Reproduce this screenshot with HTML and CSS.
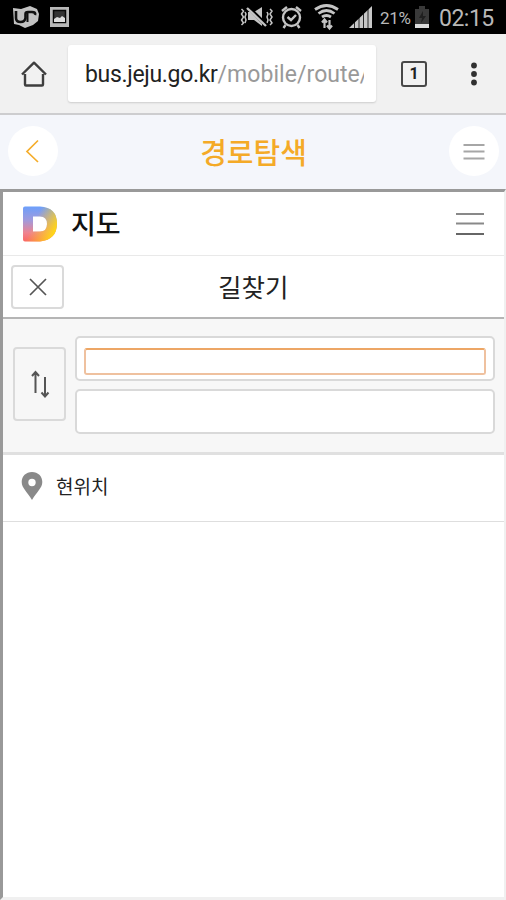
FILE: index.html
```html
<!DOCTYPE html>
<html lang="ko">
<head>
<meta charset="utf-8">
<meta name="viewport" content="width=device-width">
<title>경로탐색</title>
<link rel="stylesheet" href="styles.css">
</head>
<body>
<div class="status">
  <svg class="status-apps" width="60" height="34" viewBox="0 0 60 34">
    <path d="M1 8l8 1 9-3 7 3 2 5-1 7-5 4-8 3-6-3-5-1z" fill="#c2c2c2"/>
    <path d="M4 11v7q0 4 4.500 4t5-4v-4q0-2 2.500-2h4q4 0 3 3" fill="none" stroke="#111" stroke-width="2.600"/>
    <path d="M15.500 13v9" stroke="#111" stroke-width="2"/>
    <path d="M38 7h19v20H38z" fill="#b8b8b8"/>
    <path d="M41.500 10.500h12v12h-12z" fill="#333" stroke="#080808" stroke-width="1.500"/>
    <path d="M42 22v-3l3-2 3 1 2-2 3 2v4z" fill="#ddd"/>
  </svg>
  <svg class="status-signal" width="136" height="34" viewBox="0 0 136 34" fill="none" stroke="#c4c4c4">
    <path d="M1.500 9l2 2-2 3 2 3-2 3 2 3-2 2M5 12l1 2-1 3 1 3-1 3M30 9l2 2-2 3 2 3-2 3 2 3-2 2M27 12l1 2-1 3 1 3-1 3" stroke-width="1.500"/>
    <path d="M8 12h6l8-5v19l-8-6H8z" fill="#c4c4c4" stroke="none"/>
    <path d="M8 7l19 19" stroke="#000" stroke-width="4"/>
    <path d="M7 8l19 18" stroke-width="2.400"/>
    <circle cx="51.500" cy="17.500" r="8.500" stroke-width="2.400"/>
    <path d="M42 11l5-4M61 11l-5-4M45.500 25l-2 3M57.500 25l2 3M47.500 17l3.500 3 5-5" stroke-width="2.400"/>
    <path d="M75 9.500q11.500-8 23 0M78.500 13.500q8-6 16 0M82 17q4.500-3 9 0" stroke-width="2.800"/>
    <path d="M84.500 19.500V28M89.500 20v8.500M82 22.500l2.500-3 2.500 3M87 25.500l2.500 3 2.500-3" stroke-width="2.200"/>
    <path d="M109 28l23-22v22z" fill="#c8c8c8" stroke="none"/>
    <path d="M114.500 20v8M119 16v12M123.500 12v16M128 8v20" stroke="#000" stroke-width=".8"/>
  </svg>
  <span class="percent">21%</span>
  <svg class="battery" width="16" height="34" viewBox="0 0 16 34">
    <path d="M1 9h4V6h6v3h4v19H1z" fill="#393939"/>
    <path d="M9 11l-4 7h3l-1 5 5-7H9z" fill="#1f1f1f"/>
    <path d="M1 24h14v4H1z" fill="#ddd"/>
  </svg>
  <span class="clock">02:15</span>
</div>

<div class="browser">
  <svg class="home" width="28" height="28" viewBox="0 0 28 28" fill="none" stroke="#3e3e3e" stroke-width="2.400" stroke-linejoin="round">
    <path d="M5 14v10.500q0 1 1 1h16q1 0 1-1V14M2 14.500L14 2.700l12 11.800"/>
  </svg>
  <div class="address"><div class="url"><span class="host">bus.jeju.go.kr</span><span class="path">/mobile/route/</span></div></div>
  <div class="tabs">1</div>
  <svg class="more" width="8" height="26" viewBox="0 0 8 26" fill="#303030">
    <circle cx="4" cy="4.500" r="2.900"/><circle cx="4" cy="13" r="2.900"/><circle cx="4" cy="21.500" r="2.900"/>
  </svg>
</div>

<header class="header">
  <div class="round">
    <svg width="50" height="50" viewBox="0 0 50 50" fill="none" stroke="#f5ad2b" stroke-width="1.700"><path d="M30 14.500L19 25.500l11 10.500"/></svg>
  </div>
  <h1>경로탐색</h1>
  <div class="round">
    <svg width="50" height="50" viewBox="0 0 50 50" stroke="#a6a6a6" stroke-width="2"><path d="M14.500 19h21M14.500 25.500h21M14.500 32.500h21"/></svg>
  </div>
</header>

<main class="frame">
  <div class="brand">
    <svg class="logo" width="34" height="36" viewBox="0 0 34 36">
      <defs>
        <linearGradient id="base" x1="0" y1="0" x2="0" y2="1">
          <stop offset="0" stop-color="#6c9ffb"/><stop offset=".4" stop-color="#a29adb"/><stop offset=".75" stop-color="#ef8390"/><stop offset="1" stop-color="#fb6862"/>
        </linearGradient>
        <linearGradient id="warm" x1="0" y1=".1" x2="1" y2=".6">
          <stop offset=".4" stop-color="#ffc81b" stop-opacity="0"/><stop offset="1" stop-color="#ffd915"/>
        </linearGradient>
      </defs>
      <path fill="url(#base)" fill-rule="evenodd" d="M2 .5h15q17 1 17 17t-17 18H2q-2 0-2-2v-31q0-2 2-2zM10 10.500v15h7q7 0 7-7.500t-7-7.500z"/>
      <path fill="url(#warm)" fill-rule="evenodd" d="M2 .5h15q17 1 17 17t-17 18H2q-2 0-2-2v-31q0-2 2-2zM10 10.500v15h7q7 0 7-7.500t-7-7.500z"/>
    </svg>
    <span class="brand-name">지도</span>
    <svg class="menu" width="28" height="26" viewBox="0 0 28 26" stroke-width="2"><path d="M0 2h28M0 11.500h28" stroke="#898989"/><path d="M0 22h28" stroke="#666"/></svg>
  </div>

  <div class="title">
    <button class="close" aria-label="닫기">
      <svg width="18" height="18" viewBox="0 0 18 18" stroke="#555" stroke-width="1.700"><path d="M1 1l16 16M17 1L1 17"/></svg>
    </button>
    <h2>길찾기</h2>
  </div>

  <div class="search">
    <button class="swap" aria-label="출발 도착 전환">
      <svg width="20" height="28" viewBox="0 0 20 28" fill="none" stroke="#555" stroke-width="2"><path d="M5.500 23V3M2 6l3.500-4L9 6"/><path d="M15 7v19M11.500 22.500l3.500 4 3.500-4"/></svg>
    </button>
    <div class="fields">
      <div class="field"><div class="focus"></div></div>
      <div class="field"></div>
    </div>
  </div>

  <div class="location">
    <svg width="22" height="30" viewBox="0 0 22 30"><path fill="#898989" fill-rule="evenodd" d="M11 1C5 1 .7 5.200.7 11c0 6 5.300 9.500 10.300 18 5-8.500 10.300-12 10.300-18C21.300 5.200 17 1 11 1zm0 6.800a3.700 3.700 0 1 1 0 7.400 3.700 3.700 0 0 1 0-7.400z"/></svg>
    <span>현위치</span>
  </div>
</main>
</body>
</html>
```
FILE: styles.css
```css
* { box-sizing: border-box; }
body {
  margin: 0;
  width: 506px;
  height: 900px;
  display: flex;
  flex-direction: column;
  overflow: hidden;
  background: #fff;
  color: #222;
  font-family: Roboto, "Noto Sans CJK KR", sans-serif;
}
svg { display: block; flex: none; }
h1, h2 { margin: 0; font-weight: 400; }
button { padding: 0; background: none; flex: none; }

.status {
  height: 34px;
  flex: none;
  display: flex;
  align-items: center;
  padding: 0 12px;
  background: #000;
  color: #b8b8b8;
  white-space: nowrap;
}
.status-signal { margin-left: 168px; }
.percent { width: 35px; margin-left: 4px; padding-top: 2px; font-size: 17px; letter-spacing: -.3px; }
.clock { margin-left: 9px; padding-top: 3px; font-size: 23px; letter-spacing: -.5px; }
.battery { margin-left: -1px; }

.browser {
  height: 81px;
  flex: none;
  display: flex;
  align-items: center;
  padding-left: 20px;
  background: #f1f1f1;
  border-bottom: 2px solid #cdcdcf;
}
.address {
  width: 308px;
  height: 57px;
  margin-left: 20px;
  padding: 2px 12px 0 17px;
  display: flex;
  align-items: center;
  background: #fff;
  border-radius: 3px;
  box-shadow: 0 1px 2px #ccc;
}
.url {
  width: 279px;
  overflow: hidden;
  font-size: 23px;
  letter-spacing: -.32px;
  line-height: 32px;
  white-space: nowrap;
}
.host { color: #222; }
.path { color: #999; letter-spacing: .05px; }
.tabs {
  width: 26px;
  height: 26px;
  margin-left: 25px;
  border: 2.5px solid #484848;
  border-radius: 3px;
  font-size: 16px;
  font-weight: 700;
  line-height: 22px;
  text-align: center;
}
.more { margin-left: 43px; }

.header {
  height: 74px;
  flex: none;
  display: flex;
  align-items: center;
  justify-content: space-between;
  padding: 0 7px 2px 8px;
  background: #f4f6fb;
}
.round { width: 50px; height: 50px; border-radius: 50%; background: #fff; }
h1 { padding-top: 5px; color: #f4aa27; font-size: 29px; font-weight: 500; line-height: 40px; }

.frame {
  flex: 1;
  border: solid;
  border-width: 3px 2px 3px 3px;
  border-color: #999 #f0f0f0 #f0f0f0 #999;
}
.brand {
  height: 64px;
  display: flex;
  align-items: center;
  padding: 0 20px;
  border-bottom: 1px solid #e9e9e9;
}
.menu { margin-top: 2px; }
.brand-name { margin: 0 auto 0 14px; padding-top: 3px; color: #111; font-size: 27px; font-weight: 500; line-height: 40px; }
.title {
  height: 63px;
  display: flex;
  align-items: center;
  padding: 0 8px;
  border-bottom: 2px solid #b5b5b5;
}
.close { width: 53px; height: 44px; padding-left: 1px; display: grid; place-items: center; border: 2px solid #dadada; border-radius: 4px; }
h2 { margin-left: 154px; padding-top: 2px; font-size: 25.500px; line-height: 38px; }
.search {
  height: 136px;
  display: flex;
  align-items: center;
  gap: 9px;
  padding: 0 9px 2px 10px;
  background: #f7f7f7;
  border-bottom: 3px solid #e0e0e0;
}
.swap { width: 53px; height: 74px; margin-top: -2px; display: grid; place-items: center; border: 2px solid #dadada; border-radius: 4px; }
.fields { flex: 1; display: flex; flex-direction: column; gap: 8px; }
.field { height: 45px; padding: 10px 7px 6px; background: #fff; border: 2px solid #d9d9d9; border-radius: 5px; }
.focus { height: 27px; border: 2px solid #efc19f; border-top-color: #eda665; border-radius: 3px; }
.location {
  height: 67px;
  display: flex;
  align-items: center;
  gap: 13px;
  padding: 0 18px 4px;
  border-bottom: 1px solid #dedede;
  font-size: 19px;
}
.location span { margin-top: -2px; }
```
